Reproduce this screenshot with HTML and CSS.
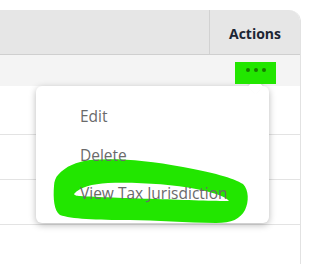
FILE: index.html
```html
<!DOCTYPE html>
<html lang="en">
<head>
    <meta charset="UTF-8">
    <title>Actions menu</title>
    <link rel="stylesheet" href="styles.css">
</head>
<body>
    <div class="page">
        <div class="table">
            <div class="table-head">
                <div class="cell"></div>
                <div class="cell cell-actions">Actions</div>
            </div>
            <div class="table-row row-active">
                <div class="cell"></div>
                <div class="cell cell-actions">
                    <button class="more-btn" aria-label="More">
                        <span class="dot"></span><span class="dot"></span><span class="dot"></span>
                    </button>
                </div>
            </div>
            <div class="table-row row-tall"></div>
            <div class="table-row"></div>
            <div class="table-row"></div>
            <div class="table-row"></div>
        </div>

        <div class="menu">
            <span class="menu-pointer"></span>
            <svg class="scribble" width="233" height="137" viewBox="0 0 233 137">
                <!-- marker highlight, offsets relative to menu box -->
                <path fill="#22e600" fill-rule="evenodd" d="M22 89 C30 80 40 76 54 74 C80 72 110 74 147 81 C175 86 198 92 207 98 C213 104 213 116 209 124 C204 133 196 137 180 137 C150 137 120 134 94 134 C60 134 35 133 24 129 C18 125 17 112 18 100 C18 95 20 91 22 89 Z M38 108 C44 101 56 98 72 97 C100 96 135 98 160 103 C180 107 190 111 193 115 C180 115 150 114 120 113 C90 112 60 111 44 110 C41 110 38 109 38 108 Z"/>
            </svg>
            <a class="menu-item">Edit</a>
            <a class="menu-item">Delete</a>
            <a class="menu-item">View Tax Jurisdiction</a>
        </div>
    </div>
</body>
</html>
```

FILE: styles.css
```css
* {
    box-sizing: border-box;
    margin: 0;
    padding: 0;
}

body {
    font-family: 'Open Sans', 'Noto Sans', sans-serif;
    background: #fff;
    color: #1c2533;
    width: 317px;
    height: 264px;
    overflow: hidden;
}

.page {
    position: relative;
    padding-top: 10px;
}

.table {
    width: 301px;
    border-right: 1px solid #e2e2e2;
    border-top-right-radius: 12px;
    overflow: hidden;
}

.table-head,
.table-row {
    display: grid;
    grid-template-columns: 210px 1fr;
}

.table-head {
    height: 45px;
    background: #e6e6e6;
    border-bottom: 1px solid #cfcfcf;
}

.table-head .cell:first-child {
    border-right: 1px solid #d2d2d2;
}

.cell-actions {
    display: flex;
    justify-content: center;
    align-items: center;
    font-size: 14px;
    font-weight: 700;
    padding-top: 3px;
}

.table-row {
    height: 45px;
    border-bottom: 1px solid #e3e3e3;
}

.row-active {
    height: 31px;
    background: #f4f4f4;
    border-bottom: none;
}

.row-active .cell-actions {
    align-items: flex-start;
    padding-top: 7px;
}

.row-tall {
    height: 49px;
}

.more-btn {
    position: relative;
    z-index: 3;
    width: 41px;
    height: 22px;
    display: flex;
    justify-content: center;
    align-items: flex-start;
    gap: 4px;
    padding-top: 6px;
    background: #22e600;
    border: none;
    margin-left: 1px;
}

.dot {
    width: 4px;
    height: 4px;
    border-radius: 50%;
    background: #177a00;
}

.menu {
    position: absolute;
    left: 36px;
    top: 86px;
    width: 233px;
    height: 137px;
    background: #fff;
    border-radius: 6px;
    box-shadow: 0 2px 7px rgba(0, 0, 0, 0.28);
    display: flex;
    flex-direction: column;
    padding-top: 19px;
    z-index: 2;
}

.menu-pointer {
    position: absolute;
    left: 214px;
    top: -5px;
    width: 11px;
    height: 11px;
    background: #fff;
    transform: rotate(45deg);
    box-shadow: -1px -1px 2px rgba(0, 0, 0, 0.12);
}

.scribble {
    position: absolute;
    left: 0;
    top: 0;
}

.menu-item {
    position: relative;
    z-index: 1;
    display: block;
    height: 38.5px;
    padding-left: 44px;
    font-size: 15.5px;
    color: #6a6a6a;
    line-height: 22px;
}
```
